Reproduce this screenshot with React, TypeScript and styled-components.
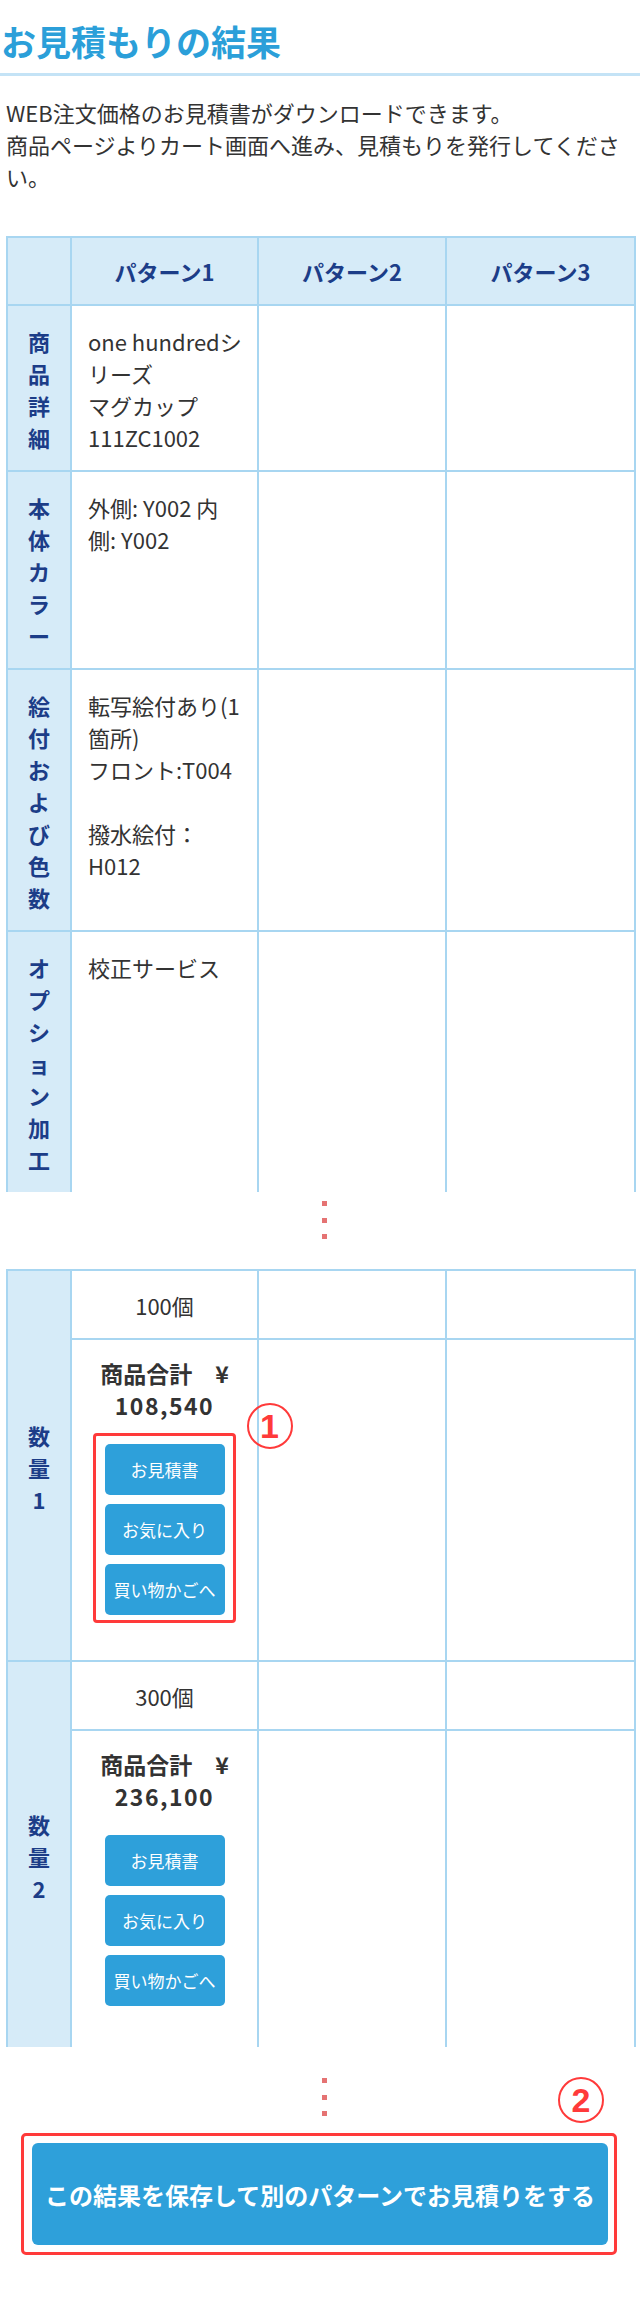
import React from 'react';
import styled, { createGlobalStyle } from 'styled-components';

const BLUE = '#2ea0da';
const NAVY = '#1c3d88';
const BORDER = '#a8d6f1';
const PALE = '#d6ebf8';
const RED = '#ff3a3a';
const TEXT = '#333333';

const GlobalStyle = createGlobalStyle`
  html, body { margin: 0; padding: 0; background: #ffffff; }
  body {
    font-family: "Noto Sans CJK JP", "Noto Sans", sans-serif;
    color: ${TEXT};
  }
  * { box-sizing: border-box; }
`;

const Page = styled.div`
  width: 640px;
  padding-bottom: 50px;
`;

const Title = styled.h1`
  margin: 0;
  padding: 17px 0 8px 1px;
  font-size: 35px;
  line-height: 48px;
  font-weight: 700;
  color: #2b9fd9;
  border-bottom: 3px solid #c4e3f6;
`;

const Lead = styled.p`
  margin: 20px 6px 0;
  font-size: 22px;
  line-height: 32px;
  color: ${TEXT};
`;

const Grid = styled.table<{ $top: number }>`
  width: 628px;
  margin: ${(p) => p.$top}px 6px 0;
  border-collapse: collapse;
  table-layout: fixed;
`;

const HeadCell = styled.th`
  background: ${PALE};
  border: 2px solid ${BORDER};
  color: ${NAVY};
  font-size: 22px;
  font-weight: 700;
  line-height: 32px;
  padding: 17px 0;
  text-align: center;
`;

const LabelCell = styled.th<{ $middle?: boolean; $open?: boolean }>`
  background: ${PALE};
  border: 2px solid ${BORDER};
  border-bottom: ${(p) => (p.$open ? '0' : `2px solid ${BORDER}`)};
  color: ${NAVY};
  font-size: 22px;
  font-weight: 700;
  line-height: 32px;
  padding: 19px 0 17px;
  text-align: center;
  vertical-align: ${(p) => (p.$middle ? 'middle' : 'top')};
`;

const Cell = styled.td<{ $open?: boolean }>`
  border: 2px solid ${BORDER};
  border-bottom: ${(p) => (p.$open ? '0' : `2px solid ${BORDER}`)};
  padding: 19px 8px 17px 16px;
  vertical-align: top;
  font-size: 22px;
  line-height: 32px;
  color: ${TEXT};
  white-space: nowrap;
`;

const QtyCell = styled.td`
  border: 2px solid ${BORDER};
  padding: 18px 0 17px;
  text-align: center;
  vertical-align: middle;
  font-size: 22px;
  line-height: 32px;
  color: ${TEXT};
`;

const TotalCell = styled.td<{ $open?: boolean }>`
  border: 2px solid ${BORDER};
  border-bottom: ${(p) => (p.$open ? '0' : `2px solid ${BORDER}`)};
  padding: 17px 0 ${(p) => (p.$open ? 41 : 45)}px;
  text-align: center;
  vertical-align: top;
`;

const EmptyCell = styled.td<{ $open?: boolean }>`
  border: 2px solid ${BORDER};
  border-bottom: ${(p) => (p.$open ? '0' : `2px solid ${BORDER}`)};
`;

const Line = styled.span`
  display: block;
  min-height: 32px;
`;

const Total = styled.div`
  font-size: 23px;
  line-height: 32px;
  font-weight: 700;
  color: ${TEXT};
`;

const Amount = styled.span`
  display: block;
  letter-spacing: 1.5px;
`;

const ButtonStack = styled.div`
  position: relative;
  display: flex;
  flex-direction: column;
  gap: 9px;
  width: 120px;
  margin: 23px auto 0;
`;

const SmallButton = styled.button`
  height: 51px;
  border: 0;
  border-radius: 5px;
  background: ${BLUE};
  color: #ffffff;
  font-family: inherit;
  font-size: 17px;
  line-height: 51px;
  padding: 0;
  cursor: pointer;
`;

const AnnotationBox = styled.div`
  position: absolute;
  top: -11px;
  left: -12px;
  right: -11px;
  bottom: -8px;
  border: 3px solid ${RED};
  border-radius: 4px;
  pointer-events: none;
`;

const Mark = styled.div<{ $left?: number; $right?: number; $top: number }>`
  position: absolute;
  top: ${(p) => p.$top}px;
  ${(p) => (p.$left !== undefined ? `left: ${p.$left}px;` : '')}
  ${(p) => (p.$right !== undefined ? `right: ${p.$right}px;` : '')}
  width: 46px;
  height: 46px;
  border: 2.5px solid ${RED};
  border-radius: 50%;
  color: ${RED};
  display: flex;
  align-items: center;
  justify-content: center;
  font-family: "Liberation Sans", Arial, sans-serif;
  font-size: 34px;
  font-weight: 700;
  line-height: 1;
`;

const DotsGap = styled.div<{ $height: number; $pad: number }>`
  position: relative;
  height: ${(p) => p.$height}px;
  padding-top: ${(p) => p.$pad}px;
  padding-left: 9px;
  display: flex;
  flex-direction: column;
  align-items: center;
  gap: 11.5px;
`;

const Dot = styled.span`
  width: 5px;
  height: 5px;
  background: #e57373;
`;

const Frame = styled.div`
  margin: 0 23px 0 21px;
  border: 3px solid ${RED};
  border-radius: 5px;
  padding: 7px 6px 7px 8px;
`;

const BigButton = styled.button`
  display: block;
  width: 100%;
  height: 102px;
  border: 0;
  border-radius: 6px;
  background: ${BLUE};
  color: #ffffff;
  font-family: inherit;
  font-size: 24px;
  font-weight: 700;
  padding: 0;
  cursor: pointer;
`;

const VLabel: React.FC<{ text: string }> = ({ text }) => (
  <>
    {Array.from(text).map((ch, i) => (
      <Line key={i}>{ch}</Line>
    ))}
  </>
);

const Cols: React.FC = () => (
  <colgroup>
    <col style={{ width: 64 }} />
    <col style={{ width: 187 }} />
    <col style={{ width: 188 }} />
    <col style={{ width: 189 }} />
  </colgroup>
);

const details = [
  { label: '商品詳細', lines: ['one hundredシ', 'リーズ', 'マグカップ', '111ZC1002'] },
  { label: '本体カラー', lines: ['外側: Y002 内', '側: Y002'] },
  { label: '絵付および色数', lines: ['転写絵付あり(1', '箇所)', 'フロント:T004', '', '撥水絵付：', 'H012'] },
  { label: 'オプション加工', lines: ['校正サービス'] },
];

const quantities = [
  { label: '数量1', qty: '100個', amount: '108,540', marked: true },
  { label: '数量2', qty: '300個', amount: '236,100', marked: false },
];

const Dots: React.FC<{ height: number; pad: number; children?: React.ReactNode }> = ({ height, pad, children }) => (
  <DotsGap $height={height} $pad={pad}>
    <Dot />
    <Dot />
    <Dot />
    {children}
  </DotsGap>
);

export default function App() {
  return (
    <Page>
      <GlobalStyle />
      <Title>お見積もりの結果</Title>
      <Lead>
        WEB注文価格のお見積書がダウンロードできます。
        <br />
        商品ページよりカート画面へ進み、見積もりを発行してください。
      </Lead>

      <Grid $top={44}>
        <Cols />
        <thead>
          <tr>
            <HeadCell />
            <HeadCell>パターン1</HeadCell>
            <HeadCell>パターン2</HeadCell>
            <HeadCell>パターン3</HeadCell>
          </tr>
        </thead>
        <tbody>
          {details.map((row, i) => {
            const last = i === details.length - 1;
            return (
              <tr key={row.label}>
                <LabelCell $open={last}>
                  <VLabel text={row.label} />
                </LabelCell>
                <Cell $open={last}>
                  {row.lines.map((l, j) => (
                    <Line key={j}>{l}</Line>
                  ))}
                </Cell>
                <Cell $open={last} />
                <Cell $open={last} />
              </tr>
            );
          })}
        </tbody>
      </Grid>

      <Dots height={77} pad={9} />

      <Grid $top={0}>
        <Cols />
        <tbody>
          {quantities.map((q, i) => {
            const last = i === quantities.length - 1;
            return (
              <React.Fragment key={q.label}>
                <tr>
                  <LabelCell rowSpan={2} $middle $open={last}>
                    <VLabel text={q.label} />
                  </LabelCell>
                  <QtyCell>{q.qty}</QtyCell>
                  <QtyCell />
                  <QtyCell />
                </tr>
                <tr>
                  <TotalCell $open={last}>
                    <Total>
                      商品合計　¥
                      <Amount>{q.amount}</Amount>
                    </Total>
                    <ButtonStack>
                      <SmallButton>お見積書</SmallButton>
                      <SmallButton>お気に入り</SmallButton>
                      <SmallButton>買い物かごへ</SmallButton>
                      {q.marked && (
                        <>
                          <AnnotationBox />
                          <Mark $left={142} $top={-41}>1</Mark>
                        </>
                      )}
                    </ButtonStack>
                  </TotalCell>
                  <EmptyCell $open={last} />
                  <EmptyCell $open={last} />
                </tr>
              </React.Fragment>
            );
          })}
        </tbody>
      </Grid>

      <Dots height={86} pad={31}>
        <Mark $right={36} $top={30}>2</Mark>
      </Dots>

      <Frame>
        <BigButton>この結果を保存して別のパターンでお見積りをする</BigButton>
      </Frame>
    </Page>
  );
}
